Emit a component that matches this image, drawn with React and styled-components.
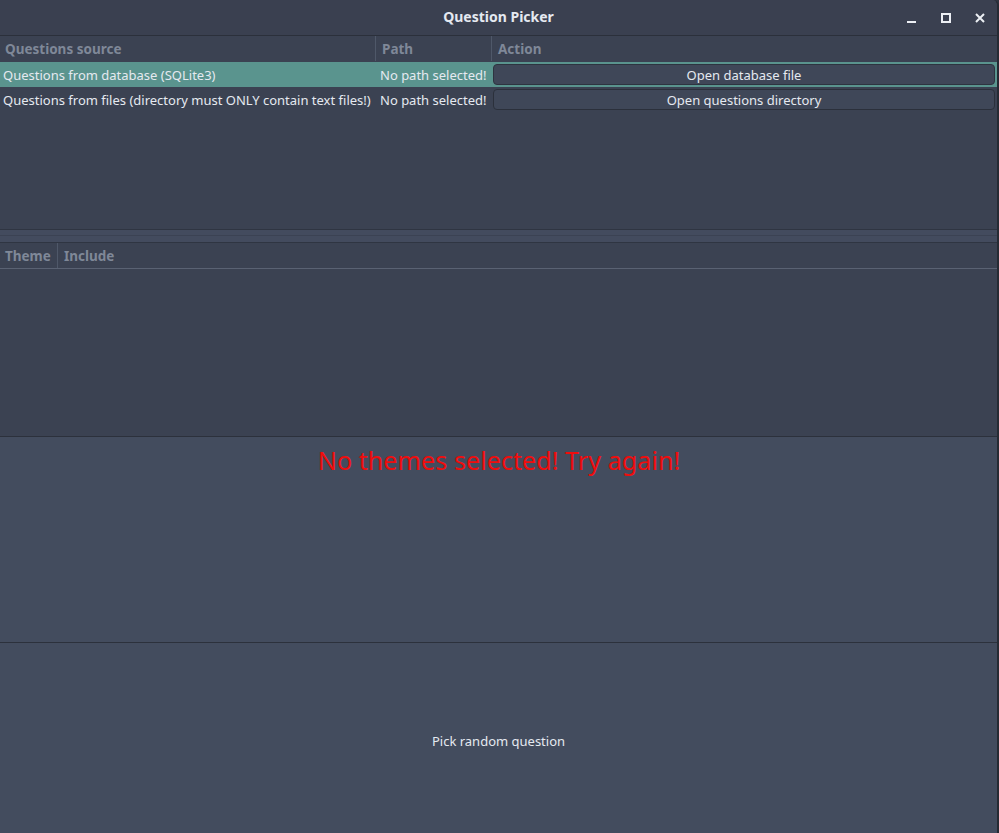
import React from "react";
import styled, { createGlobalStyle } from "styled-components";

const Global = createGlobalStyle`
  html, body { margin: 0; padding: 0; background: #2e3440; }
  body { font-family: "Noto Sans", "Open Sans", sans-serif; }
  * { box-sizing: border-box; }
`;

const Window = styled.div`
  width: 999px;
  height: 833px;
  display: flex;
  flex-direction: column;
  background: #3b4252;
  border-right: 2px solid #262b34;
  border-top-right-radius: 6px;
  overflow: hidden;
  color: #d8dee9;
  font-size: 13px;
`;

const TitleBar = styled.div`
  height: 36px;
  flex: none;
  display: flex;
  align-items: center;
  justify-content: center;
  padding-bottom: 2px;
  position: relative;
  background: #3a4050;
  border-bottom: 1px solid #2b303b;
  font-weight: 700;
  font-size: 14px;
  color: #e5e9f0;
`;

const TitleButtons = styled.div`
  position: absolute;
  right: 7px;
  top: 0;
  height: 35px;
  display: flex;
  align-items: center;
  gap: 14px;
`;

const TitleBtn = styled.div`
  width: 20px;
  height: 20px;
  display: flex;
  align-items: center;
  justify-content: center;
`;

const Table = styled.div`
  flex: none;
  height: ${(p) => p.$h}px;
  display: flex;
  flex-direction: column;
  background: #3b4252;
`;

const HeaderRow = styled.div`
  height: 26px;
  flex: none;
  display: grid;
  grid-template-columns: ${(p) => p.$cols};
  border-bottom: 1px solid ${(p) => p.$line || "transparent"};
`;

const HeaderCell = styled.div`
  display: flex;
  align-items: center;
  padding-left: ${(p) => (p.$first ? 5 : 6)}px;
  font-weight: 700;
  font-size: 13.5px;
  color: #7f8898;
  border-left: ${(p) => (p.$first ? "none" : "1px solid #4f5869")};
`;

const Row = styled.div`
  height: 25px;
  flex: none;
  display: grid;
  grid-template-columns: ${(p) => p.$cols};
  background: ${(p) => (p.$selected ? "#5a948e" : "transparent")};
`;

const Cell = styled.div`
  display: flex;
  align-items: center;
  padding-left: ${(p) => p.$pl || 3}px;
  white-space: nowrap;
  overflow: hidden;
  color: #e5e9f0;
`;

const ActionCell = styled.div`
  display: flex;
  align-items: center;
  padding: 0 2px 0 2px;
`;

const RowButton = styled.button`
  width: 100%;
  height: 21px;
  border-radius: 4px;
  background: #3f4758;
  border: 1px solid ${(p) => (p.$selected ? "#2e3440" : "#2b303b")};
  box-shadow: ${(p) => (p.$selected ? "0 0 0 1px #5a948e" : "none")};
  color: #e5e9f0;
  font-family: inherit;
  font-size: 13px;
  padding: 0;
  display: flex;
  align-items: center;
  justify-content: center;
`;

const Splitter = styled.div`
  height: 14px;
  flex: none;
  display: flex;
  flex-direction: column;
  background: #434b5e;
  border-top: 1px solid #2f3542;
  border-bottom: 1px solid #2f3542;
`;

const SplitLine = styled.div`
  height: 6px;
  border-bottom: 1px solid #3b4253;
`;

const MessageArea = styled.div`
  height: 207px;
  flex: none;
  display: flex;
  justify-content: center;
  align-items: flex-start;
  padding-top: 6px;
  background: #434c5e;
  border-top: 1px solid #2c313c;
  border-bottom: 1px solid #2c313c;
`;

const Message = styled.div`
  color: #f00d0d;
  font-size: 25.2px;
  padding-left: 1px;
`;

const PickArea = styled.button`
  flex: 1;
  display: flex;
  align-items: center;
  justify-content: center;
  background: #434c5e;
  border: none;
  padding: 5px 0 0 0;
  color: #e5e9f0;
  font-family: inherit;
  font-size: 13px;
`;

const cols1 = "375px 116px 1fr";
const cols2 = "57px 1fr";

export default function App() {
  return (
    <>
      <Global />
      <Window>
        <TitleBar>
          Question Picker
          <TitleButtons>
            <TitleBtn>
              <svg width="12" height="12" viewBox="0 0 12 12">
                <rect x="1" y="9" width="9" height="2" fill="#eceff4" />
              </svg>
            </TitleBtn>
            <TitleBtn>
              <svg width="12" height="12" viewBox="0 0 12 12">
                <rect x="2" y="2" width="8" height="8" fill="none" stroke="#eceff4" strokeWidth="2" />
              </svg>
            </TitleBtn>
            <TitleBtn>
              <svg width="12" height="12" viewBox="0 0 12 12">
                <path d="M2 2 L10 10 M10 2 L2 10" stroke="#eceff4" strokeWidth="2" />
              </svg>
            </TitleBtn>
          </TitleButtons>
        </TitleBar>

        <Table $h={193}>
          <HeaderRow $cols={cols1}>
            <HeaderCell $first>Questions source</HeaderCell>
            <HeaderCell>Path</HeaderCell>
            <HeaderCell>Action</HeaderCell>
          </HeaderRow>
          <Row $cols={cols1} $selected>
            <Cell>Questions from database (SQLite3)</Cell>
            <Cell $pl={5}>No path selected!</Cell>
            <ActionCell>
              <RowButton $selected>Open database file</RowButton>
            </ActionCell>
          </Row>
          <Row $cols={cols1}>
            <Cell>Questions from files (directory must ONLY contain text files!)</Cell>
            <Cell $pl={5}>No path selected!</Cell>
            <ActionCell>
              <RowButton>Open questions directory</RowButton>
            </ActionCell>
          </Row>
        </Table>

        <Splitter>
          <SplitLine />
        </Splitter>

        <Table $h={193}>
          <HeaderRow $cols={cols2} $line="#5a6273">
            <HeaderCell $first>Theme</HeaderCell>
            <HeaderCell>Include</HeaderCell>
          </HeaderRow>
        </Table>

        <MessageArea>
          <Message>No themes selected! Try again!</Message>
        </MessageArea>

        <PickArea>Pick random question</PickArea>
      </Window>
    </>
  );
}
